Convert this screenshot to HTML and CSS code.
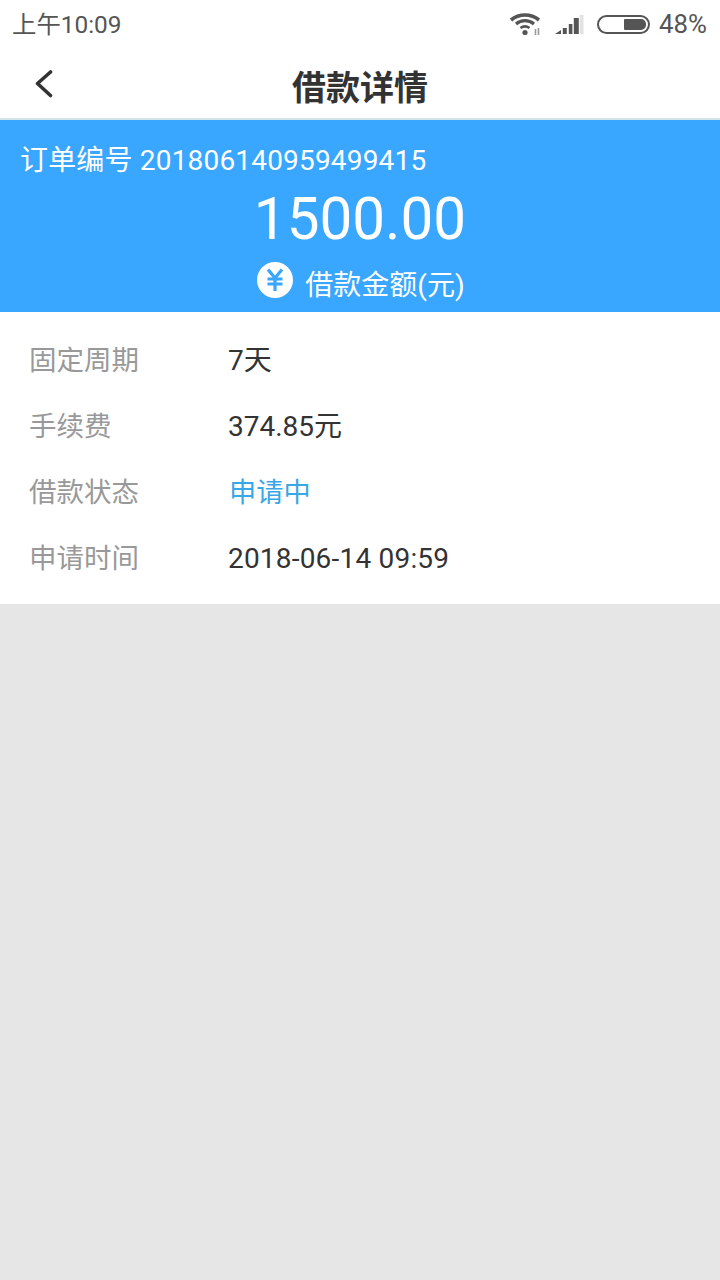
FILE: index.html
```html
<!DOCTYPE html>
<html lang="zh-CN">
<head>
    <meta charset="UTF-8">
    <meta name="viewport" content="width=device-width, initial-scale=1.0">
    <title>借款详情</title>
    <link rel="stylesheet" href="styles.css">
</head>
<body>
    <div class="status-bar">
        <span class="status-time">上午10:09</span>
        <div class="status-icons">
            <svg class="icon-wifi" width="36" height="26" viewBox="0 0 36 26">
                <path d="M2 9 A 22 22 0 0 1 30 9" fill="none" stroke="#555" stroke-width="3.6"/>
                <path d="M7 13 A 14 14 0 0 1 25 13" fill="none" stroke="#555" stroke-width="3.2"/>
                <path d="M11.5 17 A 7.5 7.5 0 0 1 20.5 17" fill="none" stroke="#555" stroke-width="2.8"/>
                <circle cx="16" cy="21.5" r="2.6" fill="#555"/>
                <path d="M26.5 18v6M29.5 17v7" stroke="#999" stroke-width="1.6"/>
            </svg>
            <svg class="icon-signal" width="30" height="22" viewBox="0 0 30 22">
                <path d="M1 21 L7 17 V21Z" fill="#555"/>
                <rect x="8.8" y="15" width="4" height="6" fill="#555"/>
                <rect x="14.8" y="11" width="3.6" height="10" fill="#555"/>
                <rect x="19.8" y="5" width="5" height="16" fill="#555"/>
                <rect x="25.8" y="2" width="3.7" height="19" fill="#e2e2e2"/>
            </svg>
            <div class="battery"><div class="battery-fill"></div></div>
            <span class="status-percent">48%</span>
        </div>
    </div>

    <header class="nav-bar">
        <svg class="nav-back" width="22" height="30" viewBox="0 0 22 30">
            <path d="M18.5 4 L5.5 15.5 L18.5 27.5" fill="none" stroke="#333" stroke-width="3.6" stroke-linecap="round" stroke-linejoin="round"/>
        </svg>
        <h1 class="nav-title">借款详情</h1>
    </header>

    <section class="summary">
        <p class="order-no">订单编号 201806140959499415</p>
        <p class="amount">1500.00</p>
        <div class="amount-label">
            <svg class="icon-yen" width="36" height="36" viewBox="0 0 36 36">
                <circle cx="18" cy="18" r="18" fill="#fff"/>
                <path d="M11 7.5 L18 16 L25 7.5 M10.5 17 H25.5 M10.5 22 H25.5 M18 16 V29" fill="none" stroke="#39a6ff" stroke-width="3.2"/>
            </svg>
            <span>借款金额(元)</span>
        </div>
    </section>

    <section class="details">
        <div class="detail-row">
            <span class="detail-label">固定周期</span>
            <span class="detail-value">7天</span>
        </div>
        <div class="detail-row">
            <span class="detail-label">手续费</span>
            <span class="detail-value">374.85元</span>
        </div>
        <div class="detail-row">
            <span class="detail-label">借款状态</span>
            <span class="detail-value detail-status">申请中</span>
        </div>
        <div class="detail-row">
            <span class="detail-label">申请时间</span>
            <span class="detail-value detail-date">2018-06-14 09:59</span>
        </div>
    </section>
</body>
</html>
```

FILE: styles.css
```css
/* page */
html, body {
    height: 100%;
}

body {
    margin: 0;
    background-color: #e6e6e6;
    font-family: Roboto, "Noto Sans CJK SC", sans-serif;
    overflow: hidden;
}

p, h1 {
    margin: 0;
}

/* status bar */
.status-bar {
    height: 48px;
    padding: 0 13px 2px 12px;
    background-color: #fff;
    color: #555;
    display: flex;
    justify-content: space-between;
    align-items: center;
    font-size: 24.4px;
}

.status-time {
    margin-bottom: 3px;
}

.status-icons {
    display: flex;
    align-items: center;
}

.status-percent {
    font-size: 25.8px;
}

.icon-wifi {
    margin-right: 9px;
}

.icon-signal {
    margin-right: 13px;
}

.battery {
    width: 53px;
    height: 19px;
    box-sizing: border-box;
    border: 2px solid #555;
    border-radius: 10px;
    padding: 2px;
    display: flex;
    justify-content: flex-end;
    margin-right: 9px;
}

.battery-fill {
    width: 22px;
    background-color: #555;
    border-radius: 1px 5px 5px 1px;
}

/* title */
.nav-bar {
    height: 66px;
    padding-top: 2px;
    background-color: #fff;
    border-bottom: 2px solid #d4e2ea;
    position: relative;
    display: flex;
    justify-content: center;
    align-items: center;
}

.nav-back {
    position: absolute;
    left: 32px;
    top: 18px;
}

.nav-title {
    font-size: 34px;
    font-weight: 700;
    color: #333;
}

/* blue block */
.summary {
    height: 192px;
    box-sizing: border-box;
    background-color: #39a6ff;
    color: #fff;
    padding-top: 23px;
}

.order-no {
    font-size: 28px;
    line-height: 36px;
    padding-left: 20px;
    letter-spacing: 0.18px;
}

.amount {
    font-size: 58.4px;
    line-height: 70px;
    text-align: center;
    margin-top: 5px;
}

.amount-label {
    display: flex;
    justify-content: center;
    align-items: center;
    font-size: 28px;
    line-height: 36px;
    margin-top: 14px;
    padding-left: 2px;
    gap: 12px;
}

.icon-yen {
    position: relative;
    top: -6px;
}

/* detail rows */
.details {
    background-color: #fff;
    padding: 13px 0 15px;
}

.detail-row {
    height: 66px;
    display: flex;
    align-items: center;
    padding-left: 29px;
    font-size: 28px;
}

.detail-label {
    width: 199px;
    font-size: 27.5px;
    color: #999;
}

.detail-value {
    color: #333;
}

.detail-date {
    letter-spacing: 0.2px;
    padding-top: 4px;
}

.detail-status {
    color: #39a6e6;
    margin-left: 1px;
    font-size: 27.2px;
}
```
